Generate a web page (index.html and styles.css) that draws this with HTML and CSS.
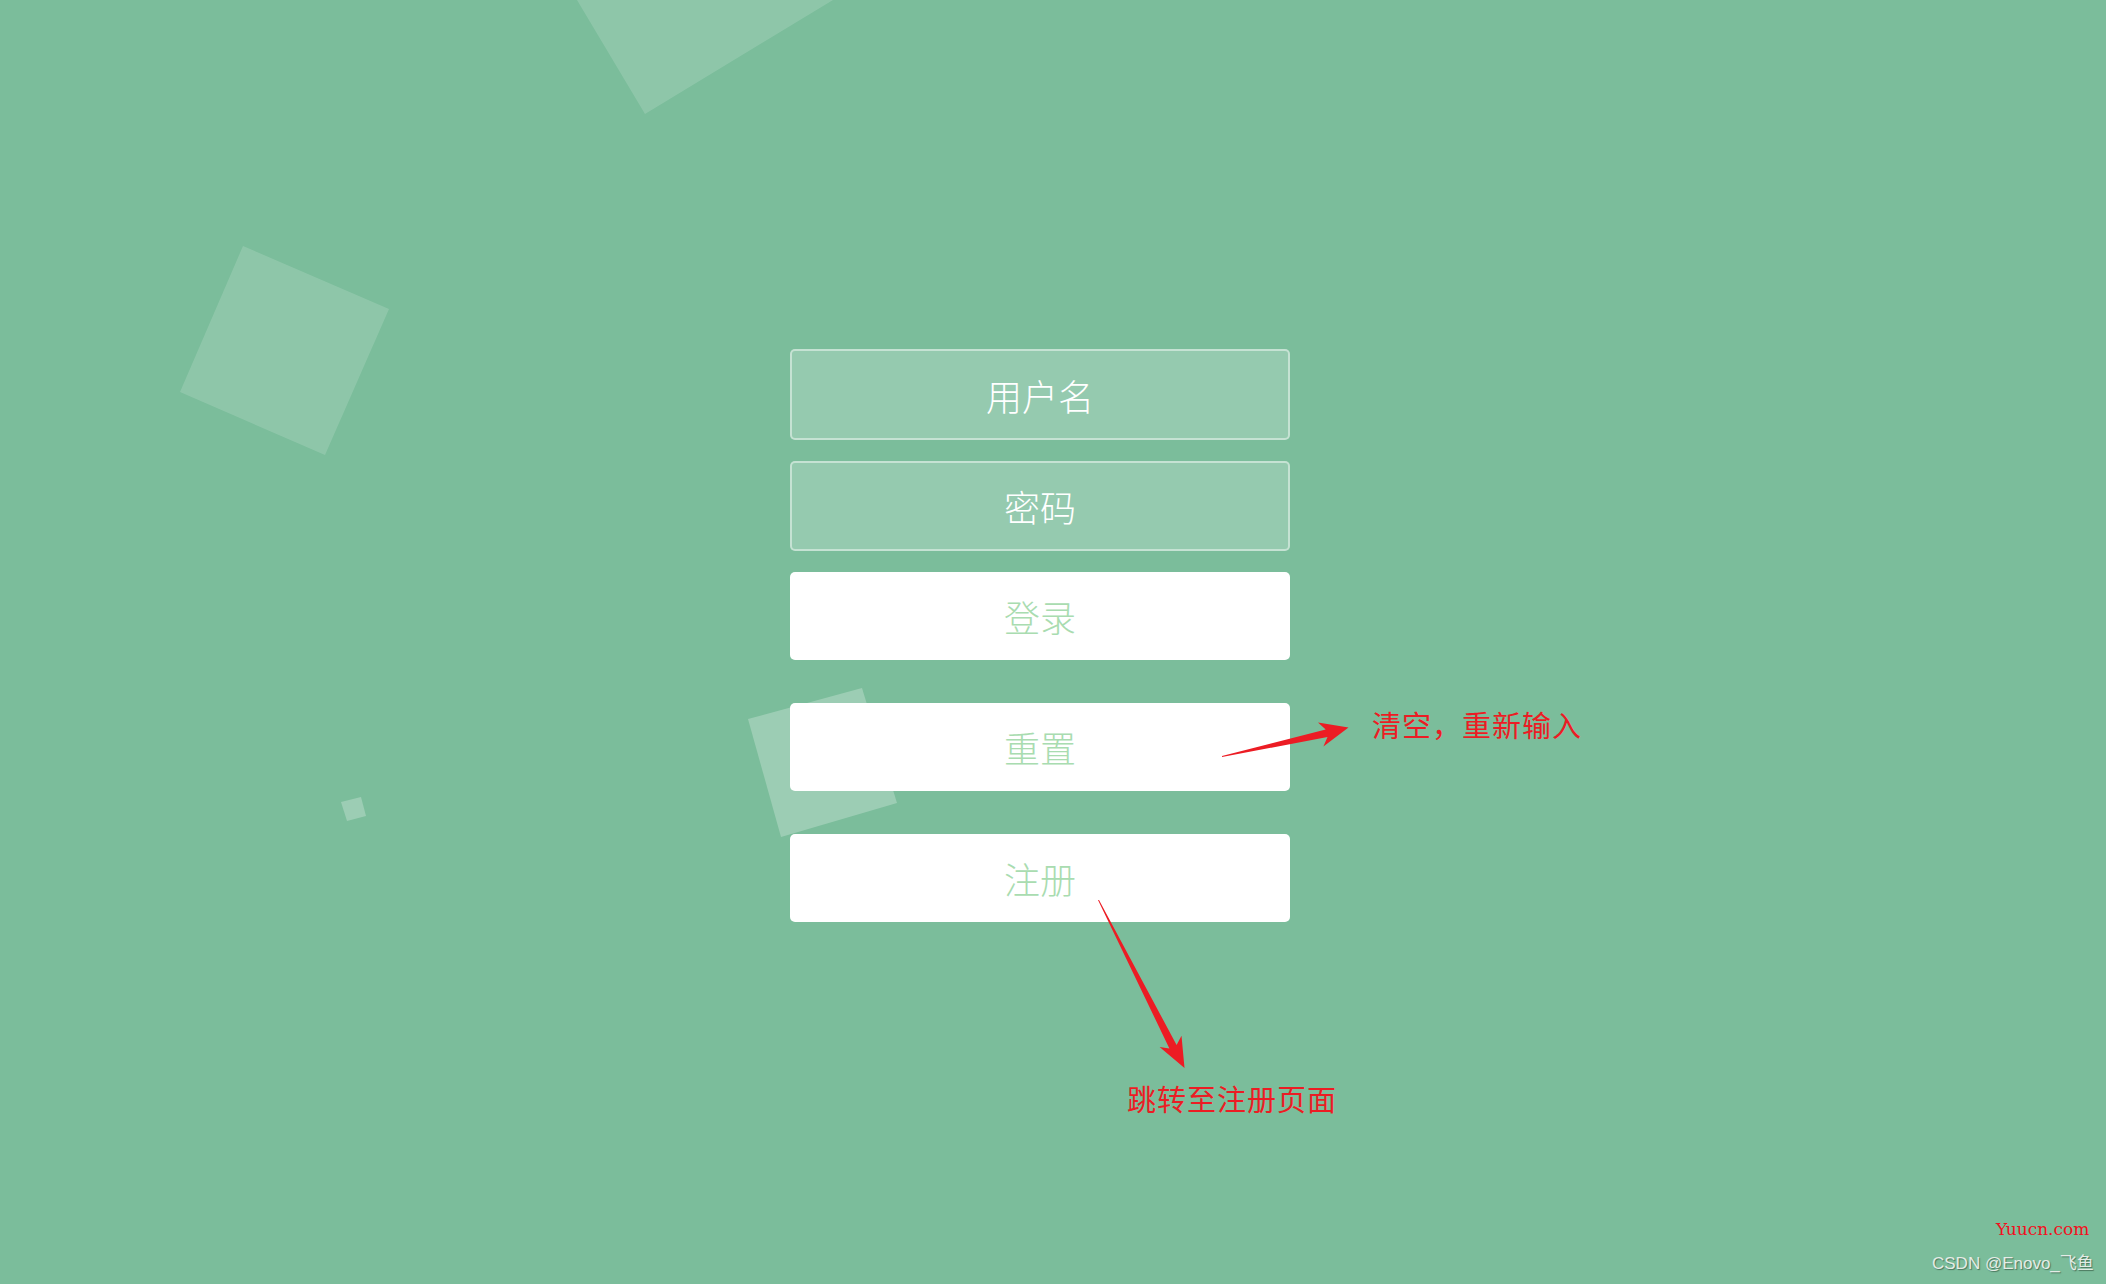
FILE: index.html
```html
<!DOCTYPE html>
<html lang="zh-CN">
<head>
<meta charset="utf-8">
<title>登录</title>
<link rel="stylesheet" href="styles.css">
</head>
<body>
<div class="page">
  <svg class="bg-shapes" width="2106" height="1284" viewBox="0 0 2106 1284" aria-hidden="true">
    <polygon class="shape" points="577,0 833,0 645,114"/>
    <polygon class="shape" points="243,246 389,309 325,455 180,392"/>
    <polygon class="shape shape-light" points="341,802 361,797 366,816 347,821"/>
    <polygon class="shape shape-light" points="748,719 862,688 897,803 781,837"/>
  </svg>

  <form class="login-form" onsubmit="return false">
    <input class="field" type="text" placeholder="用户名">
    <input class="field field-gap" type="password" placeholder="密码">
    <button class="btn" type="button">登录</button>
    <button class="btn" type="button">重置</button>
    <button class="btn" type="button">注册</button>
  </form>

  <svg class="arrows" width="2106" height="1284" viewBox="0 0 2106 1284" aria-hidden="true">
    <polygon class="arrow" points="1222,757 1327.5,737 1323.4,746.5 1348.5,727.5 1318,722.5 1325.7,729.5 1222,756"/>
    <polygon class="arrow" points="1098,900 1169.4,1048.5 1159.6,1047 1184.5,1068 1181.5,1035.8 1176.6,1045 1099,900"/>
  </svg>

  <div class="note note-reset">清空，重新输入</div>
  <div class="note note-register">跳转至注册页面</div>

  <div class="wm-site">Yuucn.com</div>
  <div class="wm-csdn">CSDN @Enovo_飞鱼</div>
</div>
</body>
</html>
```

FILE: styles.css
```css
html, body {
  margin: 0;
  padding: 0;
}

body {
  background: #7bbd9b;
  font-family: "Noto Sans CJK SC", "Noto Sans", sans-serif;
  overflow: hidden;
}

.page {
  position: relative;
  width: 2106px;
  height: 1284px;
  overflow: hidden;
}

.bg-shapes,
.arrows {
  position: absolute;
  left: 0;
  top: 0;
}

.bg-shapes { z-index: 0; }
.arrows { z-index: 2; }

.shape { fill: rgba(255, 255, 255, 0.15); }
.shape-light { fill: rgba(255, 255, 255, 0.25); }

.arrow { fill: #ec1c24; }

.login-form {
  position: relative;
  z-index: 1;
  width: 500px;
  margin-left: 790px;
  padding-top: 349px;
  display: flex;
  flex-direction: column;
}

.field {
  box-sizing: border-box;
  width: 500px;
  height: 91px;
  margin: 0 0 21px 0;
  padding: 0 20px;
  border: 2px solid rgba(255, 255, 255, 0.45);
  border-radius: 5px;
  background: rgba(255, 255, 255, 0.2);
  color: #fff;
  font-family: "Noto Sans CJK SC", "Noto Sans", sans-serif;
  font-weight: 300;
  font-size: 36px;
  text-align: center;
  outline: none;
}

.field::placeholder {
  color: #fff;
  opacity: 1;
}

.field-gap { height: 90px; }

.btn {
  box-sizing: border-box;
  width: 500px;
  height: 88px;
  margin: 0 0 43px 0;
  padding: 0;
  border: none;
  border-radius: 5px;
  background: #fff;
  color: #a9dcb0;
  font-family: "Noto Sans CJK SC", "Noto Sans", sans-serif;
  font-weight: 300;
  font-size: 36px;
  line-height: 88px;
  cursor: pointer;
}

.note {
  position: absolute;
  z-index: 3;
  color: #ec1c24;
  font-family: "Noto Sans CJK SC", sans-serif;
  font-size: 29px;
  line-height: 30px;
  white-space: nowrap;
  letter-spacing: 1px;
}

.note-reset { left: 1372px; top: 709px; }
.note-register { left: 1127px; top: 1083px; }

.wm-site {
  position: absolute;
  z-index: 3;
  left: 1996px;
  top: 1218px;
  color: #f21020;
  font-family: "DejaVu Serif", serif;
  font-weight: normal;
  font-size: 17px;
  line-height: 22px;
}

.wm-csdn {
  position: absolute;
  z-index: 3;
  left: 1932px;
  top: 1254px;
  color: #e4ece6;
  font-family: "Liberation Sans", "Noto Sans CJK SC", sans-serif;
  font-size: 17px;
  line-height: 20px;
  text-shadow: 1px 1px 1px rgba(40, 70, 50, 0.6);
}
```
